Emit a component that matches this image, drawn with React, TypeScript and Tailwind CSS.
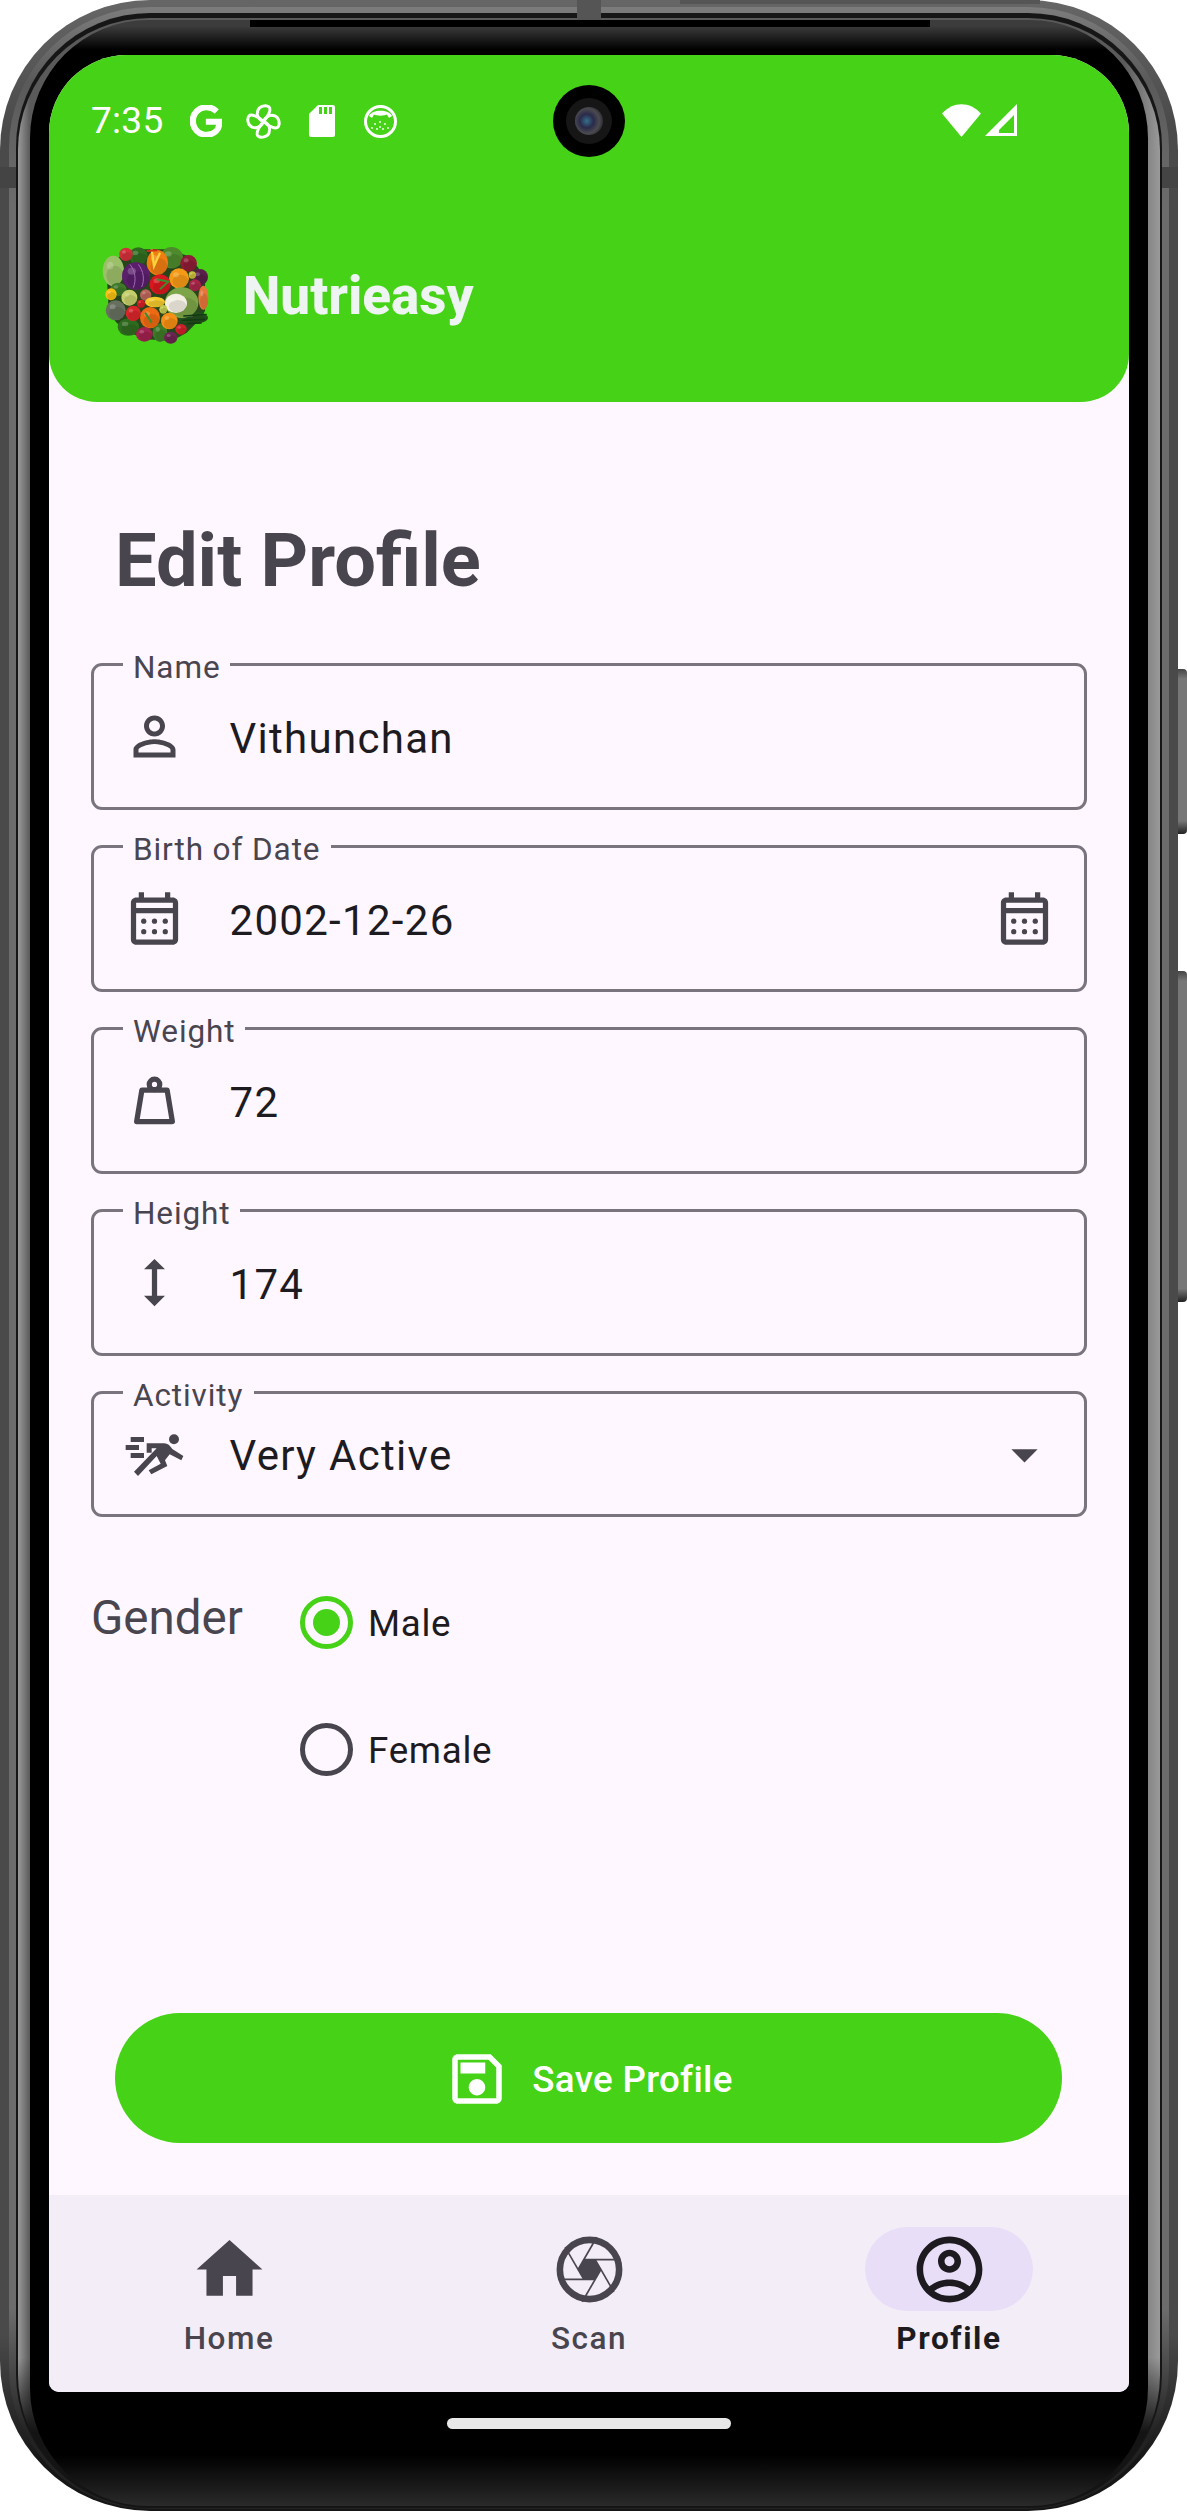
import React from "react";
import { SiGoogle } from "react-icons/si";

const FONT = { fontFamily: "Roboto, sans-serif" };

function M({ d, size = 63, className = "" }: { d: string; size?: number; className?: string }) {
  return (
    <svg width={size} height={size} viewBox="0 0 24 24" fill="currentColor" className={className}>
      <path d={d} />
    </svg>
  );
}

const PERSON =
  "M12 5.9c1.16 0 2.1.94 2.1 2.1s-.94 2.1-2.1 2.1S9.9 9.16 9.9 8s.94-2.1 2.1-2.1m0 9c2.97 0 6.1 1.46 6.1 2.1v1.1H5.9V17c0-.64 3.13-2.1 6.1-2.1M12 4C9.79 4 8 5.79 8 8s1.79 4 4 4 4-1.79 4-4-1.79-4-4-4zm0 9c-2.67 0-8 1.34-8 4v3h16v-3c0-2.66-5.33-4-8-4z";
const HEIGHT = "M13 6.99h3L12 3 8 6.99h3v10.02H8L12 21l4-3.99h-3z";
const HOME = "M10 20v-6h4v6h5v-8h3L12 3 2 12h3v8z";
const ACCOUNT =
  "M12 2C6.48 2 2 6.48 2 12s4.48 10 10 10 10-4.48 10-10S17.52 2 12 2zM7.35 18.5C8.66 17.56 10.26 17 12 17s3.34.56 4.65 1.5C15.34 19.44 13.74 20 12 20s-3.34-.56-4.65-1.5zm10.79-1.38C16.45 15.8 14.32 15 12 15s-4.45.8-6.14 2.12C4.7 15.73 4 13.95 4 12c0-4.42 3.58-8 8-8s8 3.58 8 8c0 1.95-.7 3.73-1.86 5.12zM12 6c-1.93 0-3.5 1.57-3.5 3.5S10.07 13 12 13s3.5-1.57 3.5-3.5S13.93 6 12 6zm0 5c-.83 0-1.5-.67-1.5-1.5S11.17 8 12 8s1.5.67 1.5 1.5S12.83 11 12 11z";
const SAVE =
  "M17 3H5c-1.11 0-2 .9-2 2v14c0 1.1.89 2 2 2h14c1.1 0 2-.9 2-2V7l-4-4zm2 16H5V5h11.17L19 7.83V19zm-7-7c-1.66 0-3 1.34-3 3s1.34 3 3 3 3-1.34 3-3-1.34-3-3-3zM6 6h9v4H6z";

function CalendarIcon() {
  return (
    <svg width={63} height={63} viewBox="0 0 24 24" fill="currentColor">
      <path d="M19 4h-1V2h-2v2H8V2H6v2H5C3.89 4 3.01 4.9 3.01 6L3 20c0 1.1.89 2 2 2h14c1.1 0 2-.9 2-2V6c0-1.1-.9-2-2-2zm0 16H5V10h14v10zm0-12H5V6h14v2z" />
      {[7.9, 12, 16.1].map((x) =>
        [13, 17].map((y) => <circle key={`${x}-${y}`} cx={x} cy={y} r={1} />),
      )}
    </svg>
  );
}

function WeightIcon() {
  return (
    <svg width={63} height={63} viewBox="0 0 24 24" fill="none" stroke="currentColor" strokeWidth={2} strokeLinejoin="round">
      <circle cx={12} cy={5.9} r={2} />
      <path d="M7.2 8h9.6l2 12H5.2z" />
    </svg>
  );
}

function SprintIcon() {
  return (
    <svg width={80} height={60} viewBox="0 0 240 180" fill="currentColor" className="mx-[-8.5px] mt-[-6px]">
      <circle cx={177} cy={55} r={15} />
      <rect x={47} y={48} width={40} height={15} />
      <rect x={32} y={72} width={40} height={15} />
      <rect x={47} y={96} width={40} height={15} />
      <path d="M95 67H148C158 67 165 74 172 84L205 105L199 118L164 100L150 118L157 135L109 160L101 148L137 128L125 105L69 165L57 152L125 82H110V95H95Z" />
    </svg>
  );
}

function ApertureIcon() {
  const lines = [
    [8.54, 12, 14.2, 2.2],
    [10.27, 9, 21.5, 9],
    [13.73, 9, 19.4, 18.8],
    [15.46, 12, 9.8, 21.8],
    [13.73, 15, 2.5, 15],
    [10.27, 15, 4.6, 5.2],
  ];
  return (
    <svg width={79} height={79} viewBox="0 0 24 24" fill="none" stroke="currentColor">
      <circle cx={12} cy={12} r={9} strokeWidth={2} />
      {lines.map((l, i) => (
        <line key={i} x1={l[0]} y1={l[1]} x2={l[2]} y2={l[3]} strokeWidth={0.5} />
      ))}
      <path d="M10.27 9H13.73L15.46 12L13.73 15H10.27L8.54 12Z" fill="currentColor" stroke="none" />
    </svg>
  );
}

function Pinwheel() {
  return (
    <svg width={37} height={37} viewBox="0 0 24 24" fill="none" stroke="white" strokeWidth={1.9} strokeLinejoin="round">
      {[0, 90, 180, 270].map((r) => (
        <path key={r} transform={`rotate(${r} 12 12)`} d="M12 12C8.6 10.8 7.2 7.6 8.4 4.6C9.4 2 13.6 1 15.6 2.6C17 3.8 15.6 8.4 12 12Z" />
      ))}
    </svg>
  );
}

function SdCard() {
  return (
    <svg width={26} height={32} viewBox="0 0 26 32">
      <path d="M9 0H24Q26 0 26 2V30Q26 32 24 32H2Q0 32 0 30V9Z" fill="white" />
      <rect x={10} y={2} width={3} height={7} fill="#46d216" />
      <rect x={15} y={2} width={3} height={7} fill="#46d216" />
      <rect x={20} y={2} width={3} height={7} fill="#46d216" />
    </svg>
  );
}

function FaceBadge() {
  const dots = [[11, 19], [16, 17], [21, 19], [13, 24], [19, 24], [16, 22], [24, 23], [8, 23]];
  return (
    <svg width={33} height={33} viewBox="0 0 33 33">
      <circle cx={16.5} cy={16.5} r={15} fill="#46d216" stroke="white" strokeWidth={3} />
      <path d="M5 11C8 4 25 4 28 11L25 13L23 9.5C20 11 13 11 10 9.5L8 13Z" fill="white" />
      {dots.map((p, i) => (
        <circle key={i} cx={p[0]} cy={p[1]} r={0.9} fill="white" />
      ))}
    </svg>
  );
}

function Produce() {
  const items: [number, number, number, number, string][] = [
    [175, 105, 28, 26, "#2f6b1f"],
    [275, 110, 34, 32, "#4e8a2c"],
    [100, 150, 32, 46, "#9cbf6a"],
    [115, 205, 24, 20, "#3f7a2a"],
    [360, 168, 24, 24, "#5a1f48"],
    [340, 290, 44, 18, "#244f1c"],
    [145, 318, 32, 26, "#2f6b1f"],
    [240, 335, 22, 28, "#3d7a28"],
    [272, 350, 20, 18, "#6d2352"],
    [138, 100, 20, 20, "#d22f3a"],
    [232, 125, 32, 38, "#f07d12"],
    [326, 127, 25, 25, "#8e1c36"],
    [168, 165, 42, 41, "#5a1f6b"],
    [297, 172, 30, 30, "#f59a17"],
    [240, 190, 32, 30, "#d8171f"],
    [345, 193, 18, 18, "#a82548"],
    [337, 162, 11, 11, "#c6bd3a"],
    [93, 220, 17, 18, "#f6bf12"],
    [148, 230, 24, 24, "#c5cf6b"],
    [197, 222, 17, 17, "#b9655a"],
    [183, 248, 12, 12, "#d31f24"],
    [370, 230, 15, 36, "#e8763a"],
    [305, 245, 50, 46, "#7da548"],
    [288, 247, 33, 29, "#f3efe2"],
    [225, 243, 30, 16, "#f5c92e"],
    [107, 268, 30, 30, "#67705f"],
    [160, 277, 23, 23, "#d8262a"],
    [210, 290, 30, 32, "#ec6a12"],
    [250, 265, 12, 13, "#c2c951"],
    [268, 300, 25, 25, "#f58e14"],
    [303, 325, 17, 16, "#d21f2b"],
    [193, 340, 25, 22, "#a1214f"],
  ];
  return (
    <svg width={150} height={130} viewBox="0 0 450 390" className="mt-[-18px] shrink-0">
      <path
        d="M130 95L190 85L260 85L325 105L355 140L375 190L375 270L360 295L320 335L275 360L200 355L135 330L105 300L85 250L80 150Z"
        fill="#26451c"
      />
      {items.map((c, i) => (
        <g key={i}>
          <ellipse cx={c[0]} cy={c[1]} rx={c[2]} ry={c[3]} fill={c[4]} />
          <ellipse cx={c[0] + c[2] * 0.15} cy={c[1] + c[3] * 0.3} rx={c[2] * 0.8} ry={c[3] * 0.65} fill="#000" fillOpacity={0.1} />
          <ellipse cx={c[0] - c[2] * 0.3} cy={c[1] - c[3] * 0.35} rx={c[2] * 0.3} ry={c[3] * 0.25} fill="#fff" fillOpacity={0.2} />
        </g>
      ))}
      <path d="M150 130C165 150 170 175 160 200M175 130C190 150 195 175 185 198" stroke="#a06cb5" strokeWidth={3} fill="none" />
      <path d="M215 85L222 135L240 95" stroke="#ffd23a" strokeWidth={7} fill="none" />
      <path d="M200 90L232 88" stroke="#d22f1a" strokeWidth={6} fill="none" />
      <path d="M230 175L265 182L240 205" stroke="#3f8c2c" strokeWidth={6} fill="none" />
      <path d="M195 275L215 305" stroke="#3f8c2c" strokeWidth={6} fill="none" />
      <path d="M310 285L380 280M305 298L375 295M320 308L365 306" stroke="#0f3a12" strokeWidth={4} fill="none" />
    </svg>
  );
}

function Field({
  label,
  notch,
  value,
  icon,
  trailing,
  short,
}: {
  label: string;
  notch: number;
  value: string;
  icon: React.ReactNode;
  trailing?: React.ReactNode;
  short?: boolean;
}) {
  return (
    <div
      className={`relative flex items-center rounded-[11px] border-[3px] border-[#79747e] pl-[29px] pr-[28px] ${
        short ? "h-[126px]" : "h-[147px]"
      }`}
    >
      <span
        className="absolute left-[29px] top-[-16px] whitespace-nowrap pl-[10px] text-[31.5px] leading-[36px] tracking-[0.9px] text-[#49454f]"
        style={{ width: notch }}
      >
        <span className="absolute inset-x-0 top-[10px] h-[10px] bg-[#fef7ff]" />
        <span className="relative">{label}</span>
      </span>
      <span className="flex h-[63px] w-[63px] shrink-0 items-center justify-center text-[#49454f]">{icon}</span>
      <span className="ml-[43.5px] mt-[4px] flex-1 text-[42px] leading-[56px] tracking-[1.3px] text-[#1d1b20]">{value}</span>
      {trailing && (
        <span className="flex h-[63px] w-[63px] shrink-0 items-center justify-center text-[#49454f]">{trailing}</span>
      )}
    </div>
  );
}

function Radio({ label, checked }: { label: string; checked?: boolean }) {
  return (
    <div className="flex h-[127px] items-center">
      <span className="flex h-[126px] w-[126px] items-center justify-center">
        <span
          className={`flex h-[53px] w-[53px] items-center justify-center rounded-full border-[5px] ${
            checked ? "border-[#46d216]" : "border-[#49454f]"
          }`}
        >
          {checked && <span className="h-[27px] w-[27px] rounded-full bg-[#46d216]" />}
        </span>
      </span>
      <span className="ml-[-21px] mt-[2px] text-[36.75px] tracking-[0.7px] text-[#1d1b20]">{label}</span>
    </div>
  );
}

function NavItem({ label, icon, active }: { label: string; icon: React.ReactNode; active?: boolean }) {
  return (
    <div className="flex flex-col items-center pt-[32px]">
      <span
        className={`flex h-[84px] w-[168px] items-center justify-center rounded-full ${
          active ? "bg-[#e8def8] text-[#1d1b20]" : "text-[#49454f]"
        }`}
      >
        {icon}
      </span>
      <span
        className={`mt-[7px] text-[31.5px] leading-[42px] ${
          active ? "font-bold tracking-[1.6px] text-[#1d1b20]" : "font-medium tracking-[1.5px] text-[#49454f]"
        }`}
      >
        {label}
      </span>
    </div>
  );
}

export default function App() {
  return (
    <div className="relative h-[2513px] w-[1187px] overflow-hidden bg-white" style={FONT}>
      {/* side buttons */}
      <div className="absolute left-[1178px] top-[669px] h-[165px] w-[9px] rounded-r-[4px] bg-[linear-gradient(180deg,#444,#777_6%,#777_92%,#222)]" />
      <div className="absolute left-[1178px] top-[971px] h-[331px] w-[9px] rounded-r-[4px] bg-[linear-gradient(180deg,#444,#777_3%,#777_96%,#222)]" />

      {/* phone body */}
      <div className="flex h-[2511px] w-[1178px] flex-col rounded-[150px] bg-[linear-gradient(180deg,#666_0,#4a4a4a_5%,#4a4a4a_93%,#161616_98%)] px-[9px] pb-[2px] pt-[7px]">
        <div className="flex flex-1 flex-col rounded-[141px] bg-[linear-gradient(180deg,#7c7c7c_0,#5a5a5a_3%,#6c6c6c_8%,#6c6c6c_92%,#222_97%)] px-[7px] pb-[1px] pt-[6px]">
          <div className="flex flex-1 flex-col rounded-[134px] bg-[#161616] px-[2px] pb-[1px] pt-[5px]">
            <div className="flex flex-1 flex-col rounded-[132px] bg-[linear-gradient(180deg,transparent_94%,#141414_97%),linear-gradient(90deg,#9a9a9a_0,#5a5a5a_12px,#5a5a5a_1106px,#9a9a9a_100%)] px-[12px] pb-[1px] pt-[2px]">
              <div className="flex flex-1 flex-col rounded-[118px] bg-[linear-gradient(180deg,#3c3c3c_6px,#000_30px,#000_2435px,#2a2a2a_100%)] px-[19px] pt-[35px]">
                {/* screen */}
                <div className="relative flex h-[2337px] w-[1080px] flex-col overflow-hidden rounded-b-[10px] rounded-t-[78px] bg-[#fef7ff]">
                  {/* header */}
                  <header className="relative h-[347px] shrink-0 rounded-b-[48px] bg-[#46d216]">
                    <div className="relative flex h-[132px] items-center pl-[42px] text-white">
                      <span className="w-[99px] text-[37px] font-normal tracking-[0.3px]">7:35</span>
                      <SiGoogle className="h-[32px] w-[32px]" stroke="white" strokeWidth={1.2} />
                      <span className="ml-[23px]"><Pinwheel /></span>
                      <span className="ml-[27px]"><SdCard /></span>
                      <span className="ml-[29px]"><FaceBadge /></span>
                      <span className="ml-[545px] mt-[-2px]">
                        <svg width={76} height={33} viewBox="0 0 76 33">
                          <path d="M0 9.5C11-3 28-3 39 9.5L19.5 33Z" fill="white" />
                          <path d="M43 32L75 0V32ZM57 29H72V11L57 26Z" fill="white" fillRule="evenodd" />
                        </svg>
                      </span>
                    </div>
                    <div className="flex h-[215px] items-center pl-[31px]">
                      <Produce />
                      <span className="ml-[13px] mt-[2px] text-[53px] font-extrabold leading-[60px] text-[#eef4f1]">Nutrieasy</span>
                    </div>
                  </header>

                  {/* camera hole */}
                  <div className="absolute left-[504px] top-[30px] flex h-[72px] w-[72px] items-center justify-center rounded-full bg-black">
                    <span className="flex h-[46px] w-[46px] items-center justify-center rounded-full bg-[#161616]">
                      <span className="h-[28px] w-[28px] rounded-full bg-[radial-gradient(circle_at_42%_50%,#35708a_0,#2a2a4a_32%,#4a4a50_58%,#0b0b0b_100%)]" />
                    </span>
                  </div>

                  {/* content */}
                  <main className="flex flex-1 flex-col px-[42px]">
                    <h1 className="ml-[24px] mt-[111px] text-[74px] font-bold leading-[96px] text-[#49454f]">Edit Profile</h1>
                    <div className="mt-[54px] flex flex-col gap-[35px]">
                      <Field label="Name" notch={107} value="Vithunchan" icon={<M d={PERSON} />} />
                      <Field label="Birth of Date" notch={208} value="2002-12-26" icon={<CalendarIcon />} trailing={<CalendarIcon />} />
                      <Field label="Weight" notch={122} value="72" icon={<WeightIcon />} />
                      <Field label="Height" notch={117} value="174" icon={<M d={HEIGHT} />} />
                      <Field
                        short
                        label="Activity"
                        notch={131}
                        value="Very Active"
                        icon={<SprintIcon />}
                        trailing={<M d="M7 10l5 5 5-5z" />}
                      />
                    </div>
                    <div className="mt-[42px] flex">
                      <span className="mt-[29px] w-[172px] text-[47.5px] leading-[60px] text-[#49454f]">Gender</span>
                      <div className="flex flex-col">
                        <Radio label="Male" checked />
                        <Radio label="Female" />
                      </div>
                    </div>
                    <button className="mb-[52px] ml-[24px] mr-[25px] mt-auto flex h-[130px] items-center justify-center rounded-full bg-[#46d216] pt-[2px] text-white">
                      <M d={SAVE} size={66} />
                      <span className="ml-[22px] mt-[2px] text-[36.75px] font-medium tracking-[0.3px]">Save Profile</span>
                    </button>
                  </main>

                  {/* nav */}
                  <nav className="grid h-[197px] shrink-0 grid-cols-3 bg-[#f3edf7]">
                    <NavItem label="Home" icon={<M d={HOME} size={79} />} />
                    <NavItem label="Scan" icon={<ApertureIcon />} />
                    <NavItem label="Profile" active icon={<M d={ACCOUNT} size={79} />} />
                  </nav>
                </div>
                <div className="mx-auto mt-[26px] h-[11px] w-[284px] rounded-full bg-[#e8e8e8]" />
              </div>
            </div>
          </div>
        </div>
      </div>

      {/* frame details */}
      <div className="absolute left-[250px] top-[20px] h-[7px] w-[680px] bg-black" />
      <div className="absolute left-[577px] top-0 h-[20px] w-[24px] bg-[#555]" />
      <div className="absolute left-[680px] top-0 h-[4px] w-[360px] bg-[#555]" />
      <div className="absolute left-0 top-[167px] h-[21px] w-[16px] bg-[#444]" />
      <div className="absolute left-[1162px] top-[167px] h-[21px] w-[16px] bg-[#444]" />
    </div>
  );
}
